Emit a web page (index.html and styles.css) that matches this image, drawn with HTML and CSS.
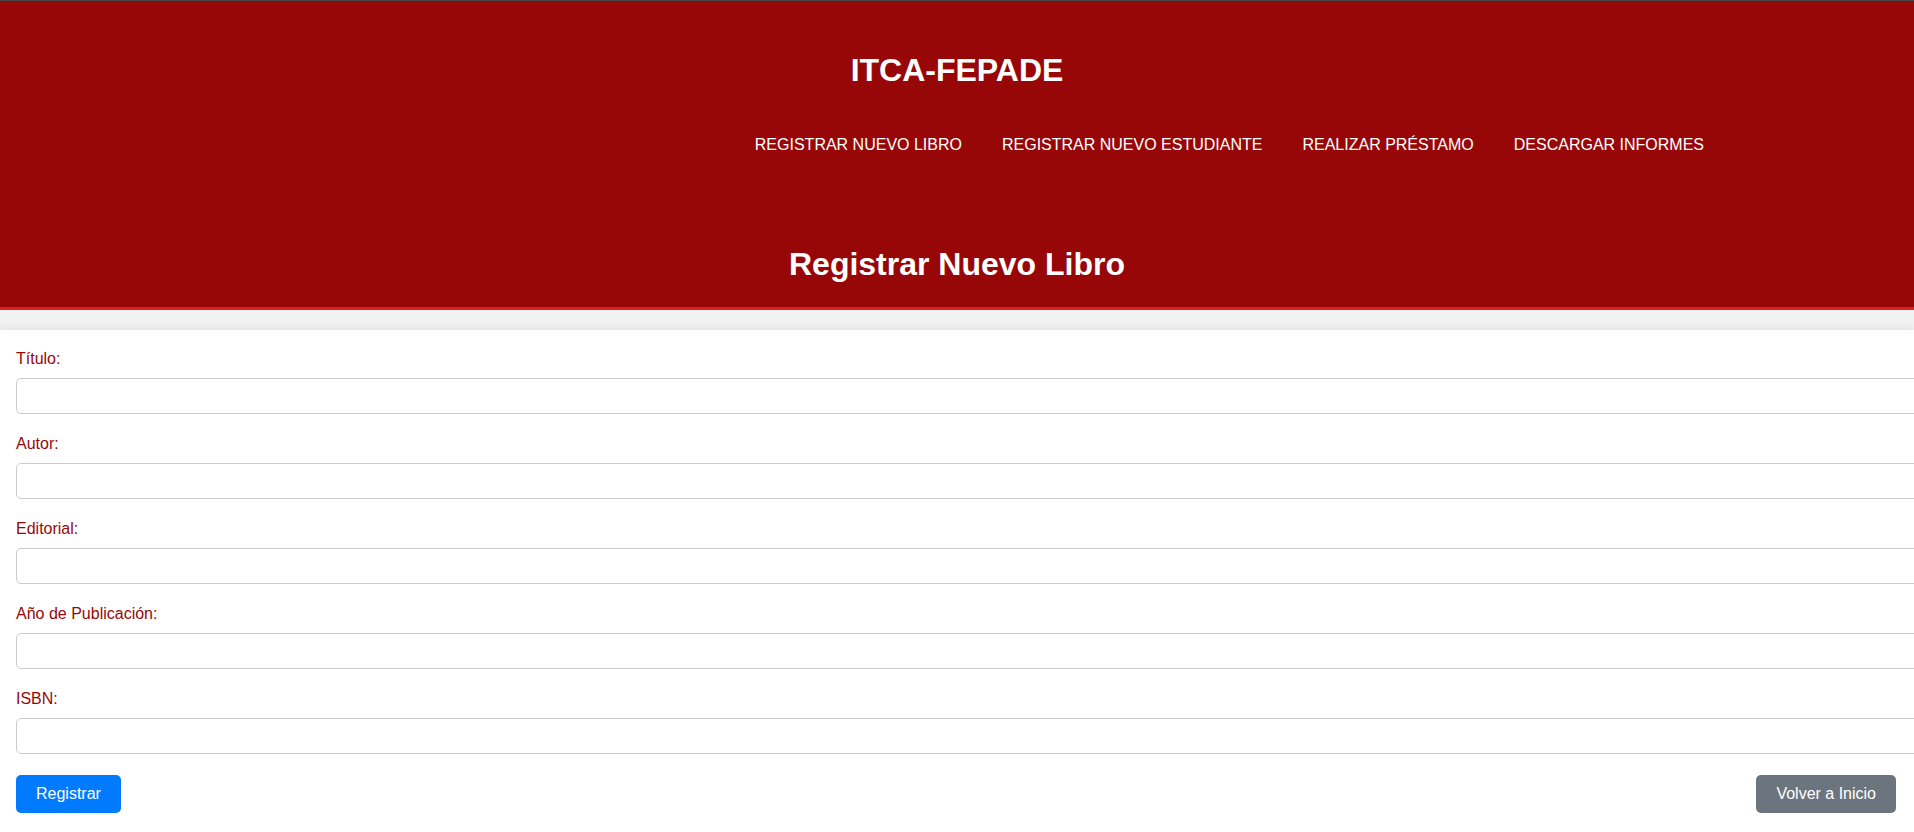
FILE: index.html
```html
<!DOCTYPE html>
<html lang="es">
<head>
<meta charset="utf-8">
<title>Registrar Nuevo Libro</title>
<link rel="stylesheet" href="styles.css">
</head>
<body>
<header class="site-header">
  <h1 class="brand">ITCA-FEPADE</h1>
  <nav class="main-nav">
    <ul class="nav-list">
      <li><a class="nav-link" href="#">REGISTRAR NUEVO LIBRO</a></li>
      <li><a class="nav-link" href="#">REGISTRAR NUEVO ESTUDIANTE</a></li>
      <li><a class="nav-link" href="#">REALIZAR PRÉSTAMO</a></li>
      <li><a class="nav-link" href="#">DESCARGAR INFORMES</a></li>
    </ul>
  </nav>
  <h2 class="page-title">Registrar Nuevo Libro</h2>
</header>
<main class="container">
  <form class="book-form">
    <label class="field-label" for="titulo">Título:</label>
    <input class="field-input" type="text" id="titulo">
    <label class="field-label" for="autor">Autor:</label>
    <input class="field-input" type="text" id="autor">
    <label class="field-label" for="editorial">Editorial:</label>
    <input class="field-input" type="text" id="editorial">
    <label class="field-label" for="anio">Año de Publicación:</label>
    <input class="field-input" type="text" id="anio">
    <label class="field-label" for="isbn">ISBN:</label>
    <input class="field-input" type="text" id="isbn">
    <div class="actions">
      <button class="btn btn-primary" type="submit">Registrar</button>
      <a class="btn btn-secondary" href="#">Volver a Inicio</a>
    </div>
  </form>
</main>
</body>
</html>
```

FILE: styles.css
```css
html, body {
  margin: 0;
  padding: 0;
  overflow: hidden;
}

body {
  background: #f2f2f2;
  font-family: "Liberation Sans", Arial, sans-serif;
  font-size: 16px;
  color: #333;
}

.site-header {
  background: #980707;
  border-top: 1px solid #474747;
  border-bottom: 3px solid #e21d1d;
  padding: 51px 0 24px;
  color: #fff;
}

.brand {
  margin: 0;
  font-size: 32px;
  line-height: 37px;
  font-weight: bold;
  text-align: center;
}

.main-nav {
  margin-top: 47px;
}

.nav-list {
  list-style: none;
  margin: 0;
  padding: 0 210px 0 0;
  display: flex;
  justify-content: flex-end;
  gap: 40px;
}

.nav-link {
  color: #fff;
  text-decoration: none;
  font-size: 16px;
  line-height: 18px;
  display: block;
}

.page-title {
  margin: 92px 0 0;
  font-size: 32px;
  line-height: 37px;
  font-weight: bold;
  text-align: center;
}

.container {
  margin-top: 20px;
  background: #fff;
  box-shadow: 0 0 10px rgba(0, 0, 0, 0.1);
  padding: 20px 18px 20px 16px;
}

.book-form {
  display: flex;
  flex-direction: column;
  align-items: flex-start;
}

.field-label {
  display: block;
  color: #980707;
  font-size: 16px;
  line-height: 18px;
  margin-bottom: 10px;
}

.field-input {
  display: block;
  width: calc(100% + 8px);
  box-sizing: content-box;
  height: 18px;
  padding: 8px;
  border: 1px solid #cccccc;
  border-radius: 5px;
  margin: 0 0 21px;
  font-family: inherit;
  font-size: 16px;
  background: #fff;
}

.actions {
  display: flex;
  justify-content: space-between;
  align-items: center;
  align-self: stretch;
}

.btn {
  display: inline-block;
  font-family: inherit;
  font-size: 16px;
  line-height: 18px;
  padding: 10px 20px;
  border: none;
  border-radius: 5px;
  color: #fff;
  text-decoration: none;
  cursor: pointer;
}

.btn-primary {
  background: #007bff;
}

.btn-secondary {
  background: #6c757d;
}
```
